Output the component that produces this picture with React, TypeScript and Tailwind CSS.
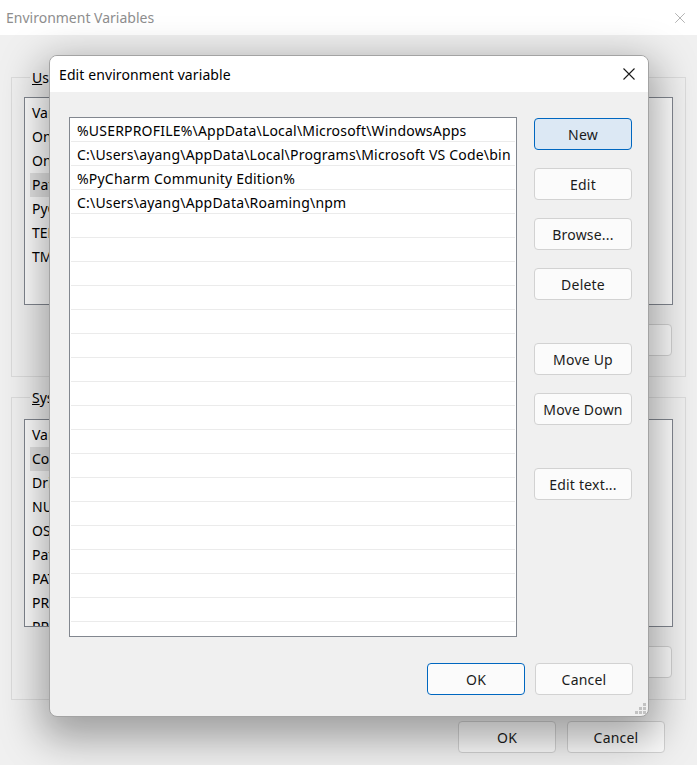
import { X } from "lucide-react"

const font = { fontFamily: '"Noto Sans", "Liberation Sans", sans-serif' }

const userVars = ["Variable", "OneDrive", "OneDriveConsumer", "Path", "PyCharm Community Edition", "TEMP", "TMP"]
const systemVars = [
  "Variable",
  "ComSpec",
  "DriverData",
  "NUMBER_OF_PROCESSORS",
  "OS",
  "Path",
  "PATHEXT",
  "PROCESSOR_ARCHITECTURE",
  "PROCESSOR_IDENTIFIER",
]
const paths = [
  "%USERPROFILE%\\AppData\\Local\\Microsoft\\WindowsApps",
  "C:\\Users\\ayang\\AppData\\Local\\Programs\\Microsoft VS Code\\bin",
  "%PyCharm Community Edition%",
  "C:\\Users\\ayang\\AppData\\Roaming\\npm",
]

function WinButton({
  children,
  className = "",
  variant = "plain",
}: {
  children: React.ReactNode
  className?: string
  variant?: "plain" | "primary" | "focus"
}) {
  const look =
    variant === "primary"
      ? "bg-[#dce8f4] border-[#0067c0]"
      : variant === "focus"
        ? "bg-[#fbfbfb] border-[#0067c0]"
        : "bg-[#fbfbfb] border-[#d2d2d2]"
  return (
    <button
      className={`h-[32px] w-[98px] rounded-[4px] border text-[14px] tracking-[0.2px] text-[#1b1b1b] flex items-center justify-center ${look} ${className}`}
    >
      {children}
    </button>
  )
}

function BgList({ items, selected, height }: { items: string[]; selected: number; height: string }) {
  return (
    <div className={`${height} border border-[#828790] bg-white pt-[3px] px-[5px] overflow-hidden relative`}>
      {items.map((item, i) => (
        <div
          key={item + i}
          className={`h-[24px] leading-[24px] text-[14px] text-black px-[2px] ${i === selected ? "bg-[#e5e5e5] w-[260px]" : ""}`}
        >
          {item}
        </div>
      ))}
    </div>
  )
}

function BgGroup({
  label,
  access,
  items,
  selected,
  listHeight,
  className,
}: {
  label: string
  access: string
  items: string[]
  selected: number
  listHeight: string
  className: string
}) {
  return (
    <fieldset className={`border border-[#dcdcdc] px-[12px] ${className}`}>
      <legend className="ml-[6px] px-[2px] text-[14px] leading-[19px] text-black">
        <span className="underline">{access}</span>
        {label}
      </legend>
      <BgList items={items} selected={selected} height={listHeight} />
      <div className="flex justify-end gap-[11px] mt-[19px]">
        <WinButton className="w-[97px]">New...</WinButton>
        <WinButton className="w-[97px]">Edit...</WinButton>
        <WinButton className="w-[97px] mr-[1px]">Delete</WinButton>
      </div>
    </fieldset>
  )
}

function Grip() {
  const dots = [
    [8, 0],
    [4, 4],
    [8, 4],
    [0, 8],
    [4, 8],
    [8, 8],
  ]
  return (
    <svg width="11" height="11" viewBox="0 0 11 11" className="absolute right-[2px] bottom-[2px]">
      {dots.map(([x, y]) => (
        <rect key={`${x}-${y}`} x={x} y={y} width="3" height="3" fill="#c2c2c2" />
      ))}
    </svg>
  )
}

export default function App() {
  return (
    <div className="relative w-[697px] h-[765px] overflow-hidden bg-[#f0f0f0]" style={font}>
      {/* background window */}
      <div className="h-[35px] bg-white flex items-center justify-between pl-[6px] pr-[8px]">
        <span className="text-[14px] text-[#8e8e8e]">Environment Variables</span>
        <X className="w-[18px] h-[18px] text-[#9a9a9a]" strokeWidth={1} />
      </div>
      <div className="px-[11px]">
        <BgGroup
          label="ser variables for ayang"
          access="U"
          items={userVars}
          selected={3}
          listHeight="h-[208px]"
          className="mt-[33px] pt-[10px] pb-[20px]"
        />
        <BgGroup
          label="ystem variables"
          access="S"
          items={systemVars}
          selected={1}
          listHeight="h-[208px]"
          className="mt-[11px] pt-[12px] pb-[21px]"
        />
        <div className="flex justify-end gap-[11px] mt-[21px] pr-[21px]">
          <WinButton className="w-[97px]">OK</WinButton>
          <WinButton className="w-[97px]">Cancel</WinButton>
        </div>
      </div>

      {/* modal dialog */}
      <div className="absolute left-[49px] top-[55px] w-[600px] h-[662px] rounded-[8px] border border-[#a3a3a3] bg-[#f0f0f0] overflow-hidden flex flex-col shadow-[0_14px_40px_8px_rgba(0,0,0,0.34)]">
        <div className="h-[36px] bg-white flex items-center justify-between pl-[9px] pr-[13px] shrink-0">
          <span className="text-[14px] tracking-[0.1px] text-black">Edit environment variable</span>
          <svg width="12" height="12" viewBox="0 0 12 12">
            <path d="M0.5 0.5 L11.5 11.5 M11.5 0.5 L0.5 11.5" stroke="#1a1a1a" strokeWidth="1.1" />
          </svg>
        </div>
        <div className="flex-1 flex flex-col pl-[19px] pr-[15px] pt-[25px]">
          <div className="flex gap-[17px]">
            <div className="w-[448px] h-[520px] border border-[#82878f] bg-white px-px overflow-hidden">
              {Array.from({ length: 22 }).map((_, i) => (
                <div
                  key={i}
                  className="h-[24px] border-b border-[#ebebeb] pl-[6px] text-[14px] tracking-[0.2px] leading-[25px] text-black whitespace-nowrap"
                >
                  {paths[i] ?? ""}
                </div>
              ))}
            </div>
            <div className="flex flex-col pt-px">
              <WinButton variant="primary">New</WinButton>
              <WinButton className="mt-[18px]">Edit</WinButton>
              <WinButton className="mt-[18px]">Browse...</WinButton>
              <WinButton className="mt-[18px]">Delete</WinButton>
              <WinButton className="mt-[43px]">Move Up</WinButton>
              <WinButton className="mt-[18px]">Move Down</WinButton>
              <WinButton className="mt-[43px]">Edit text...</WinButton>
            </div>
          </div>
          <div className="flex justify-end gap-[10px] mt-[26px]">
            <WinButton variant="focus">OK</WinButton>
            <WinButton>Cancel</WinButton>
          </div>
        </div>
        <Grip />
      </div>
    </div>
  )
}
